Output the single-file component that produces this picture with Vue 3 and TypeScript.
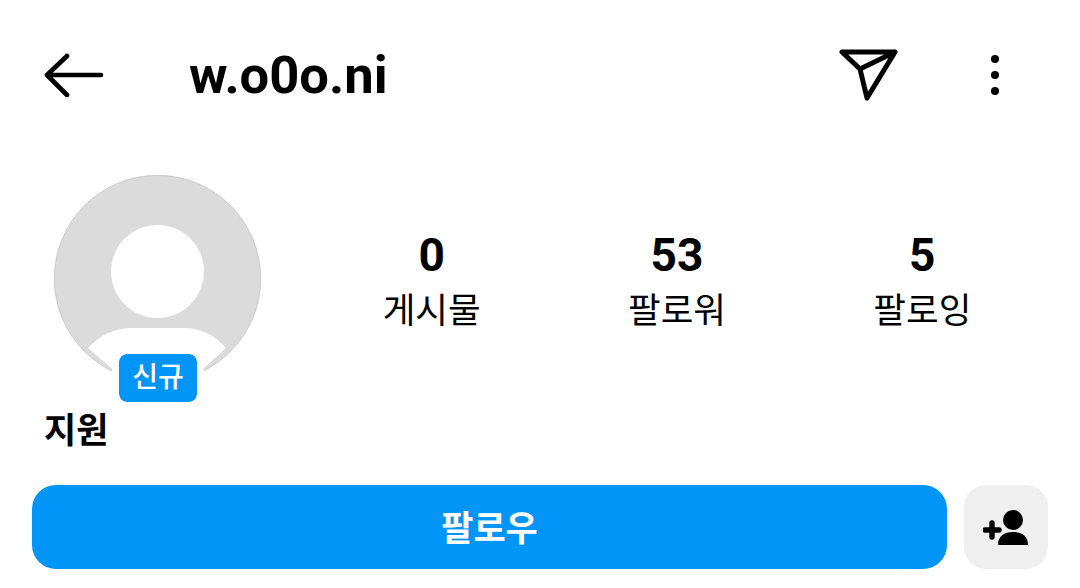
<script setup lang="ts">
interface Stat {
  label: string
  value: number
}

const username = 'w.o0o.ni'
const displayName = '지원'

const stats: Stat[] = [
  { label: '게시물', value: 0 },
  { label: '팔로워', value: 53 },
  { label: '팔로잉', value: 5 }
]
</script>

<template>
  <div class="profile">
    <header class="top-bar">
      <svg class="back" width="60" height="44" viewBox="0 0 60 44" fill="none" stroke="#000" stroke-width="4.6" stroke-linecap="round" stroke-linejoin="round">
        <path d="M3 22H57M23 3L3 22L23 42" />
      </svg>
      <h1 class="username">{{ username }}</h1>
      <svg class="send" width="60" height="52" viewBox="0 0 60 52" fill="none" stroke="#000" stroke-width="5" stroke-linejoin="round" stroke-linecap="round">
        <path d="M3 3H56L28 49L21 20ZM21 20L56 3" />
      </svg>
      <div class="dots">
        <span></span>
        <span></span>
        <span></span>
      </div>
    </header>

    <section class="summary">
      <div class="avatar-wrap">
        <svg width="207" height="207" viewBox="0 0 207 207">
          <circle cx="103.5" cy="103.5" r="103.2" fill="#dbdbdb" stroke="#b5b5b5" stroke-width="0.6" />
          <circle cx="103.5" cy="96.5" r="46.5" fill="#fff" />
          <path d="M34 173C46 160 60 153 78 153H129C147 153 161 160 172 173L150 193H57Z" fill="#fff" />
        </svg>
        <span class="badge">신규</span>
      </div>
      <div class="stats">
        <div v-for="stat in stats" :key="stat.label" class="stat">
          <strong>{{ stat.value }}</strong>
          <span>{{ stat.label }}</span>
        </div>
      </div>
    </section>

    <p class="name">{{ displayName }}</p>

    <div class="actions">
      <button class="follow">팔로우</button>
      <button class="add-user">
        <svg width="46" height="36" viewBox="0 0 46 36">
          <circle cx="30" cy="11" r="10" fill="#000" />
          <path d="M15 36C15 27 21 23 30 23C39 23 45 27 45 36Z" fill="#000" />
          <path d="M9 14V28M2 21H16" stroke="#000" stroke-width="5.4" stroke-linecap="round" fill="none" />
        </svg>
      </button>
    </div>
  </div>
</template>

<style scoped>
.profile {
  width: 1080px;
  height: 588px;
  overflow: hidden;
  background: #fff;
  color: #000;
  font-family: Roboto, "Noto Sans CJK KR", sans-serif;
}

.top-bar {
  display: flex;
  align-items: center;
  height: 150px;
  padding-left: 44px;
}

.back {
  flex: none;
  margin-right: 85px;
}

.username {
  flex: 1;
  margin: 0;
  font-size: 52.5px;
  font-weight: 700;
  line-height: 1;
}

.send {
  flex: none;
  margin-right: 92px;
}

.dots {
  display: flex;
  flex-direction: column;
  gap: 8px;
  margin-right: 81px;
}

.dots span {
  width: 8px;
  height: 8px;
  border-radius: 50%;
  background: #000;
}

.summary {
  display: flex;
  align-items: flex-start;
  height: 207px;
  margin-top: 25px;
  padding-left: 54px;
  padding-right: 35px;
}

.avatar-wrap {
  position: relative;
  flex: none;
  width: 207px;
  height: 207px;
}

.avatar-wrap svg {
  display: block;
}

.badge {
  position: absolute;
  left: 58px;
  top: 172px;
  width: 78px;
  height: 48px;
  border: 7px solid #fff;
  box-sizing: content-box;
  border-radius: 15px;
  background: #0095f6;
  background-clip: padding-box;
  color: #fff;
  font-size: 28px;
  font-weight: 500;
  line-height: 48px;
  text-align: center;
}

.stats {
  flex: 1;
  display: grid;
  grid-template-columns: repeat(3, 1fr);
  margin-left: 48px;
  margin-top: 50px;
}

.stat {
  display: flex;
  flex-direction: column;
  align-items: center;
}

.stat strong {
  font-size: 46px;
  font-weight: 700;
  line-height: 60px;
}

.stat span {
  margin-top: 4px;
  font-size: 35.5px;
  line-height: 44px;
}

.name {
  margin: 27px 0 0 44px;
  font-size: 35px;
  font-weight: 700;
  line-height: 46px;
}

.actions {
  display: flex;
  gap: 17px;
  margin-top: 30px;
  padding: 0 32px;
}

.actions button {
  height: 84px;
  border: none;
  padding: 0;
  font-family: inherit;
}

.follow {
  flex: 1;
  border-radius: 24px;
  background: #0095f6;
  color: #fff;
  font-size: 35px;
  font-weight: 700;
  padding-bottom: 4px !important;
}

.add-user {
  flex: none;
  display: flex;
  align-items: center;
  justify-content: center;
  width: 84px;
  border-radius: 22px;
  background: #efefef;
}
</style>

<style>
html,
body {
  background: #fff;
}
</style>
